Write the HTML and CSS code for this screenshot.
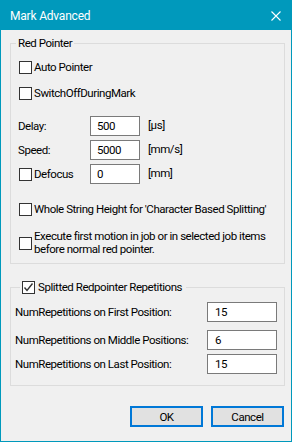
FILE: index.html
```html
<!DOCTYPE html>
<html lang="en">
<head>
  <meta charset="UTF-8">
  <meta name="viewport" content="width=device-width, initial-scale=1.0">
  <title>Mark Advanced</title>
  <link rel="stylesheet" href="styles.css">
</head>
<body>
  <div class="window">
    <div class="titlebar">
      <span class="title">Mark Advanced</span>
      <svg class="close" width="10" height="10" viewBox="0 0 10 10">
        <path d="M0.5 0.5 L9.5 9.5 M9.5 0.5 L0.5 9.5" stroke="#ffffff" stroke-width="1.1" fill="none"/>
      </svg>
    </div>

    <div class="content">
      <fieldset class="group group-pointer">
        <legend>Red Pointer</legend>

        <label class="check row-auto"><span class="box"></span>Auto Pointer</label>
        <label class="check row-switch"><span class="box"></span>SwitchOffDuringMark</label>

        <div class="field row-delay">
          <span class="field-label">Delay:</span>
          <input type="text" class="num" value="500">
          <span class="unit">[µs]</span>
        </div>
        <div class="field row-speed">
          <span class="field-label">Speed:</span>
          <input type="text" class="num" value="5000">
          <span class="unit">[mm/s]</span>
        </div>
        <div class="field row-defocus">
          <label class="field-label check"><span class="box"></span>Defocus</label>
          <input type="text" class="num" value="0">
          <span class="unit">[mm]</span>
        </div>

        <label class="check row-whole"><span class="box"></span>Whole String Height for 'Character Based Splitting'</label>
        <label class="check multi row-execute"><span class="box"></span><span>Execute first motion in job or in selected job items<br>before normal red pointer.</span></label>
      </fieldset>

      <fieldset class="group group-reps">
        <legend><span class="box checked">
          <svg width="11" height="11" viewBox="0 0 11 11"><path d="M1.5 5.5 L4 8.5 L9.5 1.5" stroke="#333333" stroke-width="1.4" fill="none"/></svg>
        </span>Splitted Redpointer Repetitions</legend>

        <div class="rep row-first">
          <span class="rep-label">NumRepetitions on First Position:</span>
          <input type="text" class="rep-input" value="15">
        </div>
        <div class="rep row-middle">
          <span class="rep-label">NumRepetitions on Middle Positions:</span>
          <input type="text" class="rep-input" value="6">
        </div>
        <div class="rep row-last">
          <span class="rep-label">NumRepetitions on Last Position:</span>
          <input type="text" class="rep-input" value="15">
        </div>
      </fieldset>

      <div class="actions">
        <button class="btn">OK</button>
        <button class="btn">Cancel</button>
      </div>
    </div>
  </div>
</body>
</html>
```

FILE: styles.css
```css
* {
  margin: 0;
  padding: 0;
  box-sizing: border-box;
}

body {
  font-family: Roboto, "Segoe UI", sans-serif;
  font-size: 11.5px;
  letter-spacing: -0.45px;
  color: #000;
  background: #ffffff;
  white-space: nowrap;
}

.window {
  width: 292px;
  height: 442px;
  border: 1px solid #0099bc;
  background: #f0f0f0;
}

.titlebar {
  height: 29px;
  background: #0099bc;
  color: #ffffff;
  display: flex;
  align-items: center;
  padding: 0 10px 0 9px;
  font-size: 12px;
  letter-spacing: -0.2px;
}

.title {
  flex: 1;
}

.content {
  padding: 5px 6px 0 9px;
}

/* group boxes */
.group {
  border: 1px solid #dcdcdc;
  min-width: 0;
}

.group-pointer {
  padding: 0 6px 7px 7px;
}

.group-pointer legend {
  margin-left: -2px;
  padding: 0 2px;
  line-height: 16px;
}

.group-reps {
  margin-top: 14px;
  padding: 0 6px 11px 4px;
}

.group-reps legend {
  margin-left: 5px;
  padding: 0 4px 0 2px;
  height: 18px;
  display: flex;
  align-items: center;
}

/* checkboxes */
.check {
  display: flex;
  align-items: center;
  height: 20px;
}

.box {
  width: 13px;
  height: 13px;
  border: 1px solid #333333;
  background: #ffffff;
  margin-left: 1px;
  margin-right: 2px;
  flex: none;
}

.box.checked {
  margin-left: 0;
  margin-right: 3px;
}

.box svg {
  display: block;
}

.check.multi {
  height: 26px;
  line-height: 13px;
}

.row-auto { margin-top: 6px; }
.row-switch { margin-top: 6px; }
.row-delay { margin-top: 13px; }
.row-speed { margin-top: 4px; }
.row-defocus { margin-top: 4px; }
.row-whole { margin-top: 15px; }
.row-execute { margin-top: 11px; }

/* label + value rows */
.field {
  display: flex;
  align-items: center;
  height: 20px;
}

.field-label {
  width: 72px;
}

input {
  font: inherit;
  letter-spacing: inherit;
  color: #000;
  background: #ffffff;
  border: 1px solid #7a7a7a;
  outline: none;
  height: 20px;
}

.num {
  width: 50px;
  padding: 0 6px;
}

.unit {
  margin-left: 8px;
  margin-top: -3px;
}

.rep {
  display: flex;
  align-items: center;
  height: 20px;
}

.rep-label {
  width: 192px;
}

.rep-input {
  width: 70px;
  padding: 0 7px;
}

.row-first { margin-top: 6px; }
.row-middle { margin-top: 8px; }
.row-last { margin-top: 4px; }

/* buttons */
.actions {
  display: flex;
  justify-content: flex-end;
  gap: 8px;
  margin-top: 20px;
  padding-right: 1px;
}

.btn {
  width: 73px;
  height: 21px;
  border: 2px solid #0078d7;
  background: #e1e1e1;
  font: inherit;
  letter-spacing: inherit;
  color: #000;
}
```
